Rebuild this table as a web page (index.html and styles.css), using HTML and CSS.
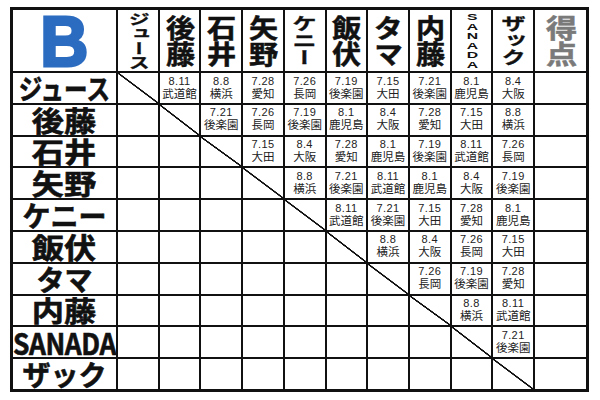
FILE: index.html
```html
<!DOCTYPE html>
<html lang="ja">
<head>
<meta charset="utf-8">
<title>B</title>
<link rel="stylesheet" href="styles.css">
</head>
<body>
<div class="board">
  <div class="hd logo"><span class="b">B</span></div>
  <div class="hd"><span class="vt small">ジュース</span></div>
  <div class="hd"><span class="vt">後藤</span></div>
  <div class="hd"><span class="vt">石井</span></div>
  <div class="hd"><span class="vt">矢野</span></div>
  <div class="hd"><span class="vt mid">ケニー</span></div>
  <div class="hd"><span class="vt">飯伏</span></div>
  <div class="hd"><span class="vt">タマ</span></div>
  <div class="hd"><span class="vt">内藤</span></div>
  <div class="hd"><span class="latin-v">SANADA</span></div>
  <div class="hd"><span class="vt mid">ザック</span></div>
  <div class="hd"><span class="vt gray">得点</span></div>

  <div class="nm"><span class="long">ジュース</span></div>
  <div class="c dg"></div>
  <div class="c"><span class="d">8.11</span><span class="v">武道館</span></div>
  <div class="c"><span class="d">8.8</span><span class="v">横浜</span></div>
  <div class="c"><span class="d">7.28</span><span class="v">愛知</span></div>
  <div class="c"><span class="d">7.26</span><span class="v">長岡</span></div>
  <div class="c"><span class="d">7.19</span><span class="v">後楽園</span></div>
  <div class="c"><span class="d">7.15</span><span class="v">大田</span></div>
  <div class="c"><span class="d">7.21</span><span class="v">後楽園</span></div>
  <div class="c"><span class="d">8.1</span><span class="v">鹿児島</span></div>
  <div class="c"><span class="d">8.4</span><span class="v">大阪</span></div>
  <div class="c"></div>

  <div class="nm"><span class="kanji">後藤</span></div>
  <div class="c"></div>
  <div class="c dg"></div>
  <div class="c"><span class="d">7.21</span><span class="v">後楽園</span></div>
  <div class="c"><span class="d">7.26</span><span class="v">長岡</span></div>
  <div class="c"><span class="d">7.19</span><span class="v">後楽園</span></div>
  <div class="c"><span class="d">8.1</span><span class="v">鹿児島</span></div>
  <div class="c"><span class="d">8.4</span><span class="v">大阪</span></div>
  <div class="c"><span class="d">7.28</span><span class="v">愛知</span></div>
  <div class="c"><span class="d">7.15</span><span class="v">大田</span></div>
  <div class="c"><span class="d">8.8</span><span class="v">横浜</span></div>
  <div class="c"></div>

  <div class="nm"><span class="kanji">石井</span></div>
  <div class="c"></div>
  <div class="c"></div>
  <div class="c dg"></div>
  <div class="c"><span class="d">7.15</span><span class="v">大田</span></div>
  <div class="c"><span class="d">8.4</span><span class="v">大阪</span></div>
  <div class="c"><span class="d">7.28</span><span class="v">愛知</span></div>
  <div class="c"><span class="d">8.1</span><span class="v">鹿児島</span></div>
  <div class="c"><span class="d">7.19</span><span class="v">後楽園</span></div>
  <div class="c"><span class="d">8.11</span><span class="v">武道館</span></div>
  <div class="c"><span class="d">7.26</span><span class="v">長岡</span></div>
  <div class="c"></div>

  <div class="nm"><span class="kanji">矢野</span></div>
  <div class="c"></div>
  <div class="c"></div>
  <div class="c"></div>
  <div class="c dg"></div>
  <div class="c"><span class="d">8.8</span><span class="v">横浜</span></div>
  <div class="c"><span class="d">7.21</span><span class="v">後楽園</span></div>
  <div class="c"><span class="d">8.11</span><span class="v">武道館</span></div>
  <div class="c"><span class="d">8.1</span><span class="v">鹿児島</span></div>
  <div class="c"><span class="d">8.4</span><span class="v">大阪</span></div>
  <div class="c"><span class="d">7.19</span><span class="v">後楽園</span></div>
  <div class="c"></div>

  <div class="nm"><span class="kana">ケニー</span></div>
  <div class="c"></div>
  <div class="c"></div>
  <div class="c"></div>
  <div class="c"></div>
  <div class="c dg"></div>
  <div class="c"><span class="d">8.11</span><span class="v">武道館</span></div>
  <div class="c"><span class="d">7.21</span><span class="v">後楽園</span></div>
  <div class="c"><span class="d">7.15</span><span class="v">大田</span></div>
  <div class="c"><span class="d">7.28</span><span class="v">愛知</span></div>
  <div class="c"><span class="d">8.1</span><span class="v">鹿児島</span></div>
  <div class="c"></div>

  <div class="nm"><span class="kanji">飯伏</span></div>
  <div class="c"></div>
  <div class="c"></div>
  <div class="c"></div>
  <div class="c"></div>
  <div class="c"></div>
  <div class="c dg"></div>
  <div class="c"><span class="d">8.8</span><span class="v">横浜</span></div>
  <div class="c"><span class="d">8.4</span><span class="v">大阪</span></div>
  <div class="c"><span class="d">7.26</span><span class="v">長岡</span></div>
  <div class="c"><span class="d">7.15</span><span class="v">大田</span></div>
  <div class="c"></div>

  <div class="nm"><span class="kana">タマ</span></div>
  <div class="c"></div>
  <div class="c"></div>
  <div class="c"></div>
  <div class="c"></div>
  <div class="c"></div>
  <div class="c"></div>
  <div class="c dg"></div>
  <div class="c"><span class="d">7.26</span><span class="v">長岡</span></div>
  <div class="c"><span class="d">7.19</span><span class="v">後楽園</span></div>
  <div class="c"><span class="d">7.28</span><span class="v">愛知</span></div>
  <div class="c"></div>

  <div class="nm"><span class="kanji">内藤</span></div>
  <div class="c"></div>
  <div class="c"></div>
  <div class="c"></div>
  <div class="c"></div>
  <div class="c"></div>
  <div class="c"></div>
  <div class="c"></div>
  <div class="c dg"></div>
  <div class="c"><span class="d">8.8</span><span class="v">横浜</span></div>
  <div class="c"><span class="d">8.11</span><span class="v">武道館</span></div>
  <div class="c"></div>

  <div class="nm"><span class="latin">SANADA</span></div>
  <div class="c"></div>
  <div class="c"></div>
  <div class="c"></div>
  <div class="c"></div>
  <div class="c"></div>
  <div class="c"></div>
  <div class="c"></div>
  <div class="c"></div>
  <div class="c dg"></div>
  <div class="c"><span class="d">7.21</span><span class="v">後楽園</span></div>
  <div class="c"></div>

  <div class="nm"><span class="kana">ザック</span></div>
  <div class="c"></div>
  <div class="c"></div>
  <div class="c"></div>
  <div class="c"></div>
  <div class="c"></div>
  <div class="c"></div>
  <div class="c"></div>
  <div class="c"></div>
  <div class="c"></div>
  <div class="c dg"></div>
  <div class="c"></div>
</div>
</body>
</html>
```
FILE: styles.css
```css
html, body {
  margin: 0;
  padding: 0;
  background: #fff;
}

body {
  width: 600px;
  height: 400px;
  padding: 7px 0 0 10px;
  box-sizing: border-box;
  font-family: "Noto Sans CJK JP", "Liberation Sans", sans-serif;
  color: #111;
}

.board {
  width: 579px;
  height: 385px;
  box-sizing: border-box;
  border: 3px solid #111;
  background: #111;
  display: grid;
  grid-template-columns: 103px repeat(10, 1fr) 51px;
  grid-template-rows: 61px repeat(10, 1fr);
  gap: 2px;
}

.hd, .nm, .c {
  background: #fff;
  min-width: 0;
  min-height: 0;
}

.hd {
  display: flex;
  align-items: center;
  justify-content: center;
}

.logo .b {
  font-family: "Liberation Sans", sans-serif;
  font-weight: 700;
  font-size: 70px;
  line-height: 54px;
  color: #2b6cc1;
  -webkit-text-stroke: 3px #2b6cc1;
  transform: scaleX(0.95);
  margin-top: 2px;
}

.vt {
  writing-mode: vertical-rl;
  text-orientation: upright;
  font-weight: 700;
  font-size: 26px;
  line-height: 1;
  transform: scaleX(1.12);
  color: #111;
  -webkit-text-stroke: 0.5px #111;
}

.vt.small {
  font-size: 14.5px;
  transform: scaleX(1.45);
  -webkit-text-stroke: 0.3px #111;
}

.vt.mid {
  font-size: 17px;
  transform: scaleX(1.45);
  -webkit-text-stroke: 0.3px #111;
}

.vt.gray {
  color: #7a7a7a;
  -webkit-text-stroke: 0.5px #7a7a7a;
  transform: scaleX(1.2);
}

.latin-v {
  writing-mode: vertical-rl;
  text-orientation: upright;
  font-family: "Liberation Sans", sans-serif;
  font-weight: 700;
  font-size: 9px;
  line-height: 1;
  transform: scale(1.75, 0.95);
  margin-top: 1px;
}

.nm {
  display: flex;
  align-items: center;
  justify-content: center;
  font-weight: 700;
  font-size: 28px;
  line-height: 26px;
  white-space: nowrap;
  -webkit-text-stroke: 0.6px #111;
}

.nm span {
  display: inline-block;
}

.nm .kanji {
  transform: scaleX(1.15);
}

.nm .long {
  transform: scaleX(0.84);
}

.nm .latin {
  font-size: 30px;
  transform: scaleX(0.88);
  letter-spacing: -0.5px;
}

.c {
  display: flex;
  flex-direction: column;
  align-items: center;
  padding-top: 2.5px;
  box-sizing: border-box;
  color: #222;
}

.c .d {
  font-family: "Liberation Sans", sans-serif;
  font-size: 11px;
  line-height: 11px;
  letter-spacing: 0.4px;
}

.c .v {
  font-family: "Noto Sans CJK JP", sans-serif;
  font-size: 11.5px;
  line-height: 12px;
}

.dg {
  background: linear-gradient(to top right,
    #fff calc(50% - 1px),
    #111 calc(50% - 0.6px),
    #111 calc(50% + 0.6px),
    #fff calc(50% + 1px));
}
```
